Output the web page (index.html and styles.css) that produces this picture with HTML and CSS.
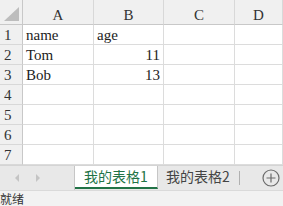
FILE: index.html
```html
<!DOCTYPE html>
<html>
<head>
<meta charset="utf-8">
<link rel="stylesheet" href="styles.css">
</head>
<body>
<div class="app">
  <div class="sheet">
    <div class="hd corner"><span class="tri"></span></div>
    <div class="hd col">A</div>
    <div class="hd col">B</div>
    <div class="hd col">C</div>
    <div class="hd col">D</div>

    <div class="hd row">1</div>
    <div class="cell">name</div>
    <div class="cell">age</div>
    <div class="cell"></div>
    <div class="cell"></div>

    <div class="hd row">2</div>
    <div class="cell">Tom</div>
    <div class="cell num">11</div>
    <div class="cell"></div>
    <div class="cell"></div>

    <div class="hd row">3</div>
    <div class="cell">Bob</div>
    <div class="cell num">13</div>
    <div class="cell"></div>
    <div class="cell"></div>

    <div class="hd row">4</div>
    <div class="cell"></div>
    <div class="cell"></div>
    <div class="cell"></div>
    <div class="cell"></div>

    <div class="hd row">5</div>
    <div class="cell"></div>
    <div class="cell"></div>
    <div class="cell"></div>
    <div class="cell"></div>

    <div class="hd row">6</div>
    <div class="cell"></div>
    <div class="cell"></div>
    <div class="cell"></div>
    <div class="cell"></div>

    <div class="hd row">7</div>
    <div class="cell"></div>
    <div class="cell"></div>
    <div class="cell"></div>
    <div class="cell"></div>
  </div>

  <div class="tabbar">
    <div class="nav">
      <span class="arrow left"></span>
      <span class="arrow right"></span>
    </div>
    <div class="tab active">我的表格1</div>
    <div class="tab">我的表格2</div>
    <span class="sep"></span>
    <div class="spacer"></div>
    <svg class="add" width="18" height="18" viewBox="0 0 18 18">
      <circle cx="9" cy="9" r="8" fill="none" stroke="#6b6b6b" stroke-width="1.2"/>
      <path d="M9 4.5v9M4.5 9h9" stroke="#6b6b6b" stroke-width="1.2"/>
    </svg>
  </div>

  <div class="status">就绪</div>
</div>
</body>
</html>
```

FILE: styles.css
```css
* { box-sizing: border-box; }
html, body {
  margin: 0;
  padding: 0;
}
body {
  width: 283px;
  height: 206px;
  overflow: hidden;
  background: #ffffff;
}
.app {
  width: 283px;
  height: 206px;
  display: flex;
  flex-direction: column;
  overflow: hidden;
}
.sheet {
  display: grid;
  grid-template-columns: 23px 71px 70px 71px 48px;
  grid-template-rows: 25px repeat(7, 20px);
  width: 283px;
  height: 165px;
  font-family: "Liberation Serif", "Times New Roman", "DejaVu Serif", serif;
  font-size: 15px;
  color: #222;
}
.hd {
  background: #f0f0f0;
  color: #333;
}
.corner {
  position: relative;
  border-right: 1px solid #c8c8c8;
  border-bottom: 1px solid #c8c8c8;
}
.tri {
  position: absolute;
  right: 3px;
  bottom: 3px;
  width: 0;
  height: 0;
  border-left: 15px solid transparent;
  border-bottom: 14px solid #bdbdbd;
}
.col {
  border-right: 1px solid #d8d8d8;
  border-bottom: 1px solid #c8c8c8;
  text-align: center;
  padding-top: 7px;
  line-height: 16px;
}
.row {
  border-right: 1px solid #c8c8c8;
  border-bottom: 1px solid #d8d8d8;
  padding-left: 4px;
  display: flex;
  align-items: flex-end;
  line-height: 16px;
  padding-bottom: 1px;
}
.cell {
  border-right: 1px solid #dcdcdc;
  border-bottom: 1px solid #dcdcdc;
  padding: 0 3px 1px 3px;
  display: flex;
  align-items: flex-end;
  line-height: 16px;
  white-space: nowrap;
}
.num {
  justify-content: flex-end;
}
.tabbar {
  height: 25px;
  background: #e8e8e8;
  display: flex;
  align-items: stretch;
  font-family: "Noto Sans CJK SC", sans-serif;
  font-size: 14px;
  border-top: 1px solid #d4d4d4;
}
.nav {
  width: 75px;
  display: flex;
  align-items: center;
  gap: 17px;
  padding-left: 15px;
  border-right: 1px solid #c6c6c6;
}
.arrow {
  width: 0;
  height: 0;
  border-top: 4px solid transparent;
  border-bottom: 4px solid transparent;
}
.arrow.left {
  border-right: 4px solid #c4c4c4;
}
.arrow.right {
  border-left: 4px solid #c4c4c4;
}
.tab {
  height: 23px;
  line-height: 21px;
  padding: 0 8px;
  color: #444;
}
.tab.active {
  width: 83px;
  background: #ffffff;
  color: #217346;
  border-right: 1px solid #c6c6c6;
  border-bottom: 2px solid #217346;
  text-align: center;
  padding: 0;
}
.sep {
  width: 1px;
  height: 14px;
  background: #b0b0b0;
  align-self: center;
  margin-left: 1px;
}
.spacer {
  flex: 1;
}
.add {
  align-self: center;
  margin-right: 3px;
  margin-top: -1px;
}
.status {
  height: 16px;
  background: #f2f2f2;
  border-top: 1px solid #dadada;
  font-family: "Noto Sans CJK SC", sans-serif;
  font-size: 12px;
  line-height: 15px;
  color: #333;
}
```
